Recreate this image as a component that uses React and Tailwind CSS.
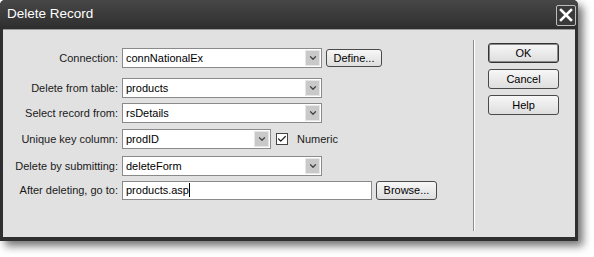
import { Check, ChevronDown } from 'lucide-react';

const font = { fontFamily: '"Liberation Sans", Arial, sans-serif' };

function Select({ value, width }) {
    return (
        <div className={`flex items-center h-[20px] bg-white border border-[#8a8a8a] ${width}`}>
            <span className="flex-1 pl-[3px] text-[11px] text-black leading-none">{value}</span>
            <div className="w-[15px] h-[16px] mr-[1px] bg-[#c9c9c9] border border-[#e6e6e6] flex items-center justify-center">
                <ChevronDown className="w-[10px] h-[10px] text-[#444]" strokeWidth={3} />
            </div>
        </div>
    );
}

function Button({ children, className = '' }) {
    return (
        <div className={`flex items-center justify-center rounded-[3px] border border-[#4a4a4a] bg-gradient-to-b from-[#f7f7f7] to-[#dedede] text-[11px] text-black ${className}`}>
            {children}
        </div>
    );
}

function Row({ label, mt, children }) {
    return (
        <div className={`flex items-center h-[20px] ${mt}`}>
            <div className="w-[119px] text-right text-[11px] text-[#1a1a1a] pr-[4px] whitespace-nowrap">{label}</div>
            {children}
        </div>
    );
}

export default function App() {
    return (
        <div className="w-[594px] h-[257px] bg-white overflow-hidden" style={font}>
            <div className="w-[578px] h-[241px] rounded-t-[5px] bg-[#2f2f2f] flex flex-col px-[3px] pb-[4px] shadow-[5px_5px_8px_rgba(0,0,0,0.55)]">
                <div className="h-[26px] flex items-center justify-between bg-gradient-to-b from-[#474747] to-[#313131] -mx-[3px] px-[7px] rounded-t-[5px]">
                    <span className="text-white text-[13.5px] leading-none mt-[2px]">Delete Record</span>
                    <div className="w-[20px] h-[21px] mt-[4px] -mr-[5px] border border-[#bdbdbd] rounded-[2px] bg-[#3a3a3a] flex items-center justify-center">
                        <svg width="14" height="14" viewBox="0 0 14 14">
                            <path d="M2 2 L12 12 M12 2 L2 12" stroke="white" strokeWidth="2.6" strokeLinecap="square" />
                        </svg>
                    </div>
                </div>
                <div className="flex-1 mt-[3px] bg-[#e1e1e1] border-t border-[#9a9a9a] flex">
                    <div className="w-[470px]">
                        <Row label="Connection:" mt="mt-[18px]">
                            <Select value="connNationalEx" width="w-[200px]" />
                            <Button className="ml-[4px] w-[56px] h-[18px]">Define...</Button>
                        </Row>
                        <Row label="Delete from table:" mt="mt-[10px]">
                            <Select value="products" width="w-[200px]" />
                        </Row>
                        <Row label="Select record from:" mt="mt-[5px]">
                            <Select value="rsDetails" width="w-[200px]" />
                        </Row>
                        <Row label="Unique key column:" mt="mt-[6px]">
                            <Select value="prodID" width="w-[149px]" />
                            <div className="ml-[5px] w-[12px] h-[12px] bg-white border border-[#444] flex items-center justify-center">
                                <Check className="w-[10px] h-[10px] text-[#222]" strokeWidth={3} />
                            </div>
                            <span className="ml-[9px] text-[11px] text-[#1a1a1a]">Numeric</span>
                        </Row>
                        <Row label="Delete by submitting:" mt="mt-[7px]">
                            <Select value="deleteForm" width="w-[200px]" />
                        </Row>
                        <Row label="After deleting, go to:" mt="mt-[4px]">
                            <div className="flex items-center w-[250px] h-[19px] bg-white border border-[#8a8a8a] pl-[3px] text-[11px] text-black">
                                products.asp
                                <span className="w-[1px] h-[14px] bg-black" />
                            </div>
                            <Button className="ml-[4px] w-[61px] h-[19px]">Browse...</Button>
                        </Row>
                    </div>
                    <div className="w-[2px] mt-[10px] mb-[6px] border-l border-[#8c8c8c] border-r border-r-white" />
                    <div className="flex flex-col pl-[13px] pt-[13px] gap-[6px]">
                        <Button className="w-[71px] h-[20px] border-[#333] shadow-[inset_0_0_0_1px_#8a8a8a]">OK</Button>
                        <Button className="w-[71px] h-[20px]">Cancel</Button>
                        <Button className="w-[71px] h-[20px]">Help</Button>
                    </div>
                </div>
            </div>
        </div>
    );
}
